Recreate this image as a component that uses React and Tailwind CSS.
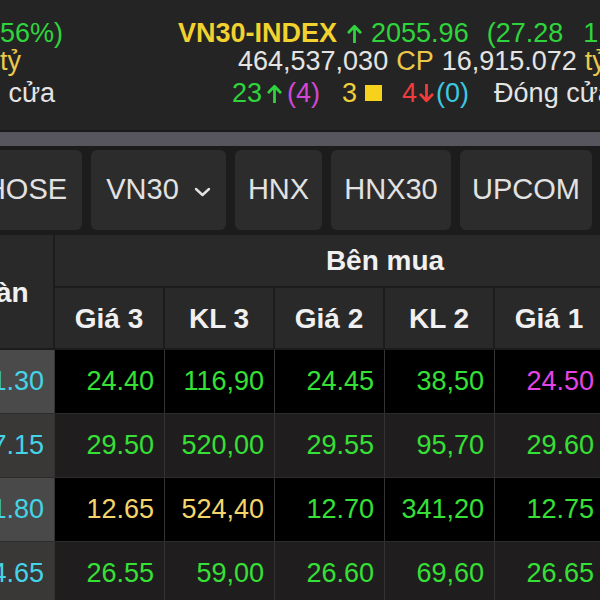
import React from "react";

function UpArrow({ color, className = "" }) {
  return (
    <svg width="15" height="19" viewBox="0 0 15 19" className={"shrink-0 " + className}>
      <path d="M7.5 18.5V2.5M1.8 8.2L7.5 2.3L13.2 8.2" fill="none" stroke={color} strokeWidth="2.8" strokeLinecap="round" strokeLinejoin="round" />
    </svg>
  );
}

function DownArrow({ color, className = "" }) {
  return (
    <svg width="15" height="19" viewBox="0 0 15 19" className={"shrink-0 " + className}>
      <path d="M7.5 0.5V16.5M1.8 10.8L7.5 16.7L13.2 10.8" fill="none" stroke={color} strokeWidth="2.8" strokeLinecap="round" strokeLinejoin="round" />
    </svg>
  );
}

const G = "text-[#36e036]";
const Y = "text-[#f3d56c]";
const M = "text-[#e444e4]";
const C = "text-[#44d4e6]";

const rows = [
  { bg: "bg-black", first: "bg-[#4a4a4a]", cells: [["21.30", C], ["24.40", G], ["116,90", G], ["24.45", G], ["38,50", G], ["24.50", M], ["10,00", M]] },
  { bg: "bg-[#1f1d1d]", first: "bg-[#3a3737]", cells: [["27.15", C], ["29.50", G], ["520,00", G], ["29.55", G], ["95,70", G], ["29.60", G], ["12,30", G]] },
  { bg: "bg-black", first: "bg-[#4a4949]", cells: [["11.80", C], ["12.65", Y], ["524,40", Y], ["12.70", G], ["341,20", G], ["12.75", G], ["80,10", G]] },
  { bg: "bg-[#1f1d1d]", first: "bg-[#3a3737]", cells: [["24.65", C], ["26.55", G], ["59,00", G], ["26.60", G], ["69,60", G], ["26.65", G], ["44,20", G]] },
];

export default function App() {
  return (
    <div className="w-[600px] h-[600px] overflow-hidden bg-[#242424] font-['Liberation_Sans',Arial,sans-serif]">
      {/* Top index info */}
      <div className="h-[130px] pt-[18px] text-[27px] whitespace-nowrap">
        <div className="flex items-center h-[30px] leading-[30px]">
          <div className="w-[63px] shrink-0 flex justify-end">
            <span className="shrink-0 text-[#2fd43c]">(-11.50&nbsp;&nbsp;-0.56%)</span>
          </div>
          <div className="ml-[115px] flex items-center shrink-0">
            <span className="font-bold text-[#f2d22e]">VN30-INDEX</span>
            <UpArrow color="#2fd43c" className="ml-[10px]" />
            <span className="ml-[9px] text-[#2fd43c]">2055.96</span>
            <span className="ml-[18px] text-[#2fd43c]">(27.28</span>
            <span className="ml-[20px] text-[#2fd43c]">1.34%)</span>
          </div>
        </div>
        <div className="flex items-center h-[26px] leading-[26px]">
          <div className="w-[63px] shrink-0 flex justify-end">
            <span className="shrink-0 mr-[42px]">
              <span className="text-[#e4e4e4]">21,304.51 </span>
              <span className="text-[#ecc94a]">tỷ</span>
            </span>
          </div>
          <div className="ml-[175px] flex items-center shrink-0">
            <span className="text-[#e4e4e4]">464,537,030</span>
            <span className="ml-[8px] text-[#ecc94a]">CP</span>
            <span className="ml-[8px] text-[#e4e4e4]">16,915.072</span>
            <span className="ml-[8px] text-[#ecc94a]">tỷ</span>
          </div>
        </div>
        <div className="flex items-center h-[30px] mt-[4px] leading-[30px]">
          <div className="w-[63px] shrink-0 flex justify-end">
            <span className="shrink-0 mr-[8px] text-[#e4e4e4]">Đóng cửa</span>
          </div>
          <div className="ml-[169px] flex items-center shrink-0">
            <span className="text-[#2fd43c]">23</span>
            <UpArrow color="#2fd43c" className="ml-[5px]" />
            <span className="ml-[5px] text-[#d447d4]">(4)</span>
            <span className="ml-[22px] text-[#f0cf3a]">3</span>
            <span className="ml-[8px] w-[17px] h-[16px] bg-[#f7d21c] shrink-0"></span>
            <span className="ml-[20px] text-[#f03c3c]">4</span>
            <DownArrow color="#f03c3c" className="ml-[2px]" />
            <span className="ml-[2px] text-[#3cc8e0]">(0)</span>
            <span className="ml-[25px] text-[#e4e4e4]">Đóng cửa</span>
          </div>
        </div>
      </div>

      {/* separator band */}
      <div className="h-[2px] bg-[#1a1a1a]"></div>
      <div className="h-[14px] bg-[#57565f]"></div>

      {/* Tabs */}
      <div className="h-[89px] pt-[4px] pb-[5px] bg-[#1c1c1c] flex gap-[9px] text-[29px] text-[#e2e2e2] whitespace-nowrap">
        <div className="shrink-0 ml-[-30px] w-[112px] h-full rounded-[6px] bg-[#2c2c2c] flex items-center justify-center">HOSE</div>
        <div className="shrink-0 w-[135px] h-full rounded-[6px] bg-[#2c2c2c] flex items-center justify-center">
          <span>VN30</span>
          <svg width="17" height="10" viewBox="0 0 17 10" className="ml-[15px] mt-[4px]">
            <path d="M2 2L8.5 8L15 2" fill="none" stroke="#e2e2e2" strokeWidth="2.4" strokeLinecap="round" strokeLinejoin="round" />
          </svg>
        </div>
        <div className="shrink-0 w-[87px] h-full rounded-[6px] bg-[#2c2c2c] flex items-center justify-center">HNX</div>
        <div className="shrink-0 w-[120px] h-full rounded-[6px] bg-[#2c2c2c] flex items-center justify-center">HNX30</div>
        <div className="shrink-0 w-[132px] h-full rounded-[6px] bg-[#2c2c2c] flex items-center justify-center">UPCOM</div>
        <div className="shrink-0 w-[120px] h-full rounded-[6px] bg-[#2c2c2c]"></div>
      </div>

      {/* Table header */}
      <div className="h-[115px] bg-[#292929] flex text-[28px] font-bold text-[#f0f0f0] whitespace-nowrap">
        <div className="shrink-0 ml-[-55px] w-[110px] h-full border-r-2 border-[#1c1c1c] flex items-center justify-center pl-[8px]">Sàn</div>
        <div className="shrink-0 flex flex-col">
          <div className="h-[53px] w-[660px] border-b-2 border-[#1c1c1c] flex items-center justify-center">Bên mua</div>
          <div className="h-[62px] flex">
            {["Giá 3", "KL 3", "Giá 2", "KL 2", "Giá 1", "KL 1"].map((t) => (
              <div key={t} className="shrink-0 w-[110px] h-full border-r-2 border-[#1c1c1c] flex items-center justify-center">{t}</div>
            ))}
          </div>
        </div>
      </div>
      <div className="h-[2px] bg-[#1c1c1c] mt-[-2px] relative"></div>

      {/* Data rows */}
      {rows.map((r, i) => (
        <div key={i} className={"flex h-[64px] border-b border-[#2c2c2c] text-[27px] whitespace-nowrap " + r.bg}>
          {r.cells.map(([v, c], j) => (
            <div
              key={j}
              className={
                "shrink-0 w-[110px] h-full border-r border-[#333333] flex items-center justify-end pr-[10px] " +
                c +
                (j === 0 ? " ml-[-55px] " + r.first : "")
              }
            >
              {v}
            </div>
          ))}
        </div>
      ))}
    </div>
  );
}
